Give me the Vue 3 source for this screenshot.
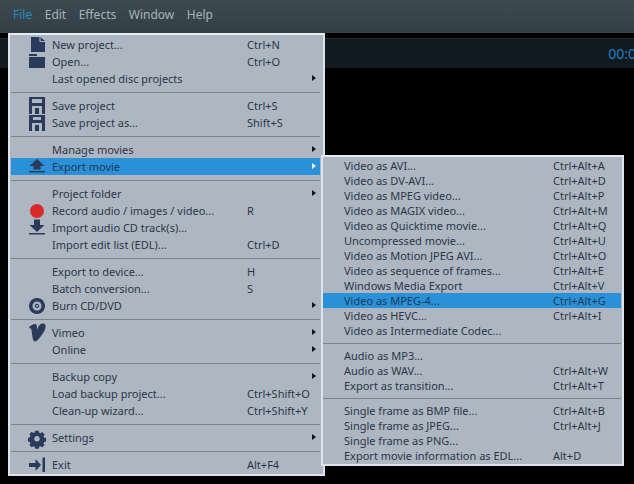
<script setup>
const main = [
  [
    { t: 'New project...', k: 'Ctrl+N', i: 'new' },
    { t: 'Open...', k: 'Ctrl+O', i: 'open' },
    { t: 'Last opened disc projects', sub: 1 }
  ],
  [
    { t: 'Save project', k: 'Ctrl+S', i: 'save' },
    { t: 'Save project as...', k: 'Shift+S', i: 'saveas' }
  ],
  [
    { t: 'Manage movies', sub: 1 },
    { t: 'Export movie', sub: 1, i: 'export', on: 1 }
  ],
  [
    { t: 'Project folder', sub: 1 },
    { t: 'Record audio / images / video...', k: 'R', i: 'rec' },
    { t: 'Import audio CD track(s)...', i: 'import' },
    { t: 'Import edit list (EDL)...', k: 'Ctrl+D' }
  ],
  [
    { t: 'Export to device...', k: 'H' },
    { t: 'Batch conversion...', k: 'S' },
    { t: 'Burn CD/DVD', sub: 1, i: 'disc' }
  ],
  [
    { t: 'Vimeo', sub: 1, i: 'vimeo' },
    { t: 'Online', sub: 1 }
  ],
  [
    { t: 'Backup copy', sub: 1 },
    { t: 'Load backup project...', k: 'Ctrl+Shift+O' },
    { t: 'Clean-up wizard...', k: 'Ctrl+Shift+Y' }
  ],
  [{ t: 'Settings', sub: 1, i: 'gear' }],
  [{ t: 'Exit', k: 'Alt+F4', i: 'exit' }]
]
const second = [
  [
    { t: 'Video as AVI...', k: 'Ctrl+Alt+A' },
    { t: 'Video as DV-AVI...', k: 'Ctrl+Alt+D' },
    { t: 'Video as MPEG video...', k: 'Ctrl+Alt+P' },
    { t: 'Video as MAGIX video...', k: 'Ctrl+Alt+M' },
    { t: 'Video as Quicktime movie...', k: 'Ctrl+Alt+Q' },
    { t: 'Uncompressed movie...', k: 'Ctrl+Alt+U' },
    { t: 'Video as Motion JPEG AVI...', k: 'Ctrl+Alt+O' },
    { t: 'Video as sequence of frames...', k: 'Ctrl+Alt+E' },
    { t: 'Windows Media Export', k: 'Ctrl+Alt+V' },
    { t: 'Video as MPEG-4...', k: 'Ctrl+Alt+G', on: 1 },
    { t: 'Video as HEVC...', k: 'Ctrl+Alt+I' },
    { t: 'Video as Intermediate Codec...' }
  ],
  [
    { t: 'Audio as MP3...' },
    { t: 'Audio as WAV...', k: 'Ctrl+Alt+W' },
    { t: 'Export as transition...', k: 'Ctrl+Alt+T' }
  ],
  [
    { t: 'Single frame as BMP file...', k: 'Ctrl+Alt+B' },
    { t: 'Single frame as JPEG...', k: 'Ctrl+Alt+J' },
    { t: 'Single frame as PNG...' },
    { t: 'Export movie information as EDL...', k: 'Alt+D' }
  ]
]
const bar = ['File', 'Edit', 'Effects', 'Window', 'Help']
</script>

<template>
  <div class="app">
    <nav class="bar">
      <span v-for="(b, n) in bar" :key="b" class="bar-item" :class="{ active: n === 0 }">{{ b }}</span>
    </nav>
    <div class="gap"></div>
    <div class="strip"><span class="time">00:0</span></div>

    <div class="menu main">
      <div v-for="(g, gi) in main" :key="gi" class="group">
        <div v-for="r in g" :key="r.t" class="row" :class="{ on: r.on }">
          <span class="ico">
            <svg v-if="r.i" width="22" height="22" viewBox="0 0 22 22" class="svg">
              <path v-if="r.i === 'new'" d="M5 3h8.500v5H19v10H5z M14.500 3L19 7h-4.500z" />
              <path v-else-if="r.i === 'open'" d="M3 3h8v2H3z M3 6h16v11H3z" />
              <path v-else-if="r.i === 'save'" fill-rule="evenodd" d="M3 2h16v17H3z M6 4v4h10V4z M6 11v8h10v-8z M9 13h4v6H9z" />
              <path v-else-if="r.i === 'saveas'" fill-rule="evenodd" d="M3 3h16v16H3z M7 5v3h8V5z M6 11v8h10v-8z M9 13h4v6H9z" />
              <path v-else-if="r.i === 'export'" d="M11 3l7.500 7H14.500v3.500h-7V10H3.500z M3 15h16v1.500H3z" />
              <circle v-else-if="r.i === 'rec'" cx="11" cy="11" r="7" class="red" />
              <path v-else-if="r.i === 'import'" d="M8 2.500h6v5.500h4.500L11 15 3.500 8H8z M3 16h16v1.500H3z" />
              <path v-else-if="r.i === 'disc'" fill-rule="evenodd" d="M11 3a8 8 0 1 0 .01 0z M11 6.500a4.500 4.500 0 1 1-.01 0z M11 8.800a2.200 2.200 0 1 0 .01 0z M11 10a1 1 0 1 1-.01 0z" />
              <path v-else-if="r.i === 'vimeo'" d="M3 5c3-2.500 5-3.500 6.500-3 1.500.5 1.500 3 1.500 6 1-3 2.500-6 5.500-6.500 2.500-.4 3.500 1.500 3 4-.8 4.500-6 11-9 13.500-1.500 1-2.800.2-3.500-1.500C6 14 6 9 5 6.500 4.700 6 4 6.500 3.800 6.700z" />
              <path v-else-if="r.i === 'gear'" fill-rule="evenodd" d="M9 3.300h4l.5 2.300 1.500.6 2-1.300 2.700 2.700-1.300 2 .6 1.500 2.300.4v4l-2.300.5-.6 1.500 1.300 2-2.700 2.700-2-1.300-1.500.6-.5 2.300H9l-.5-2.300-1.500-.6-2 1.300-2.700-2.700 1.300-2-.6-1.500-2.300-.5v-4L3 10.700l.6-1.500-1.300-2L5 4.500l2 1.300 1.500-.6z M11 9.300a3.200 3.200 0 1 0 .01 0z" transform="translate(1.300 .8) scale(.88)" />
              <path v-else-if="r.i === 'exit'" d="M3 9h6.500V5l5.500 6-5.500 6v-4H3z M16.500 3.500H19V18h-2.500z" />
            </svg>
          </span>
          <span class="label">{{ r.t }}</span>
          <span class="key">{{ r.k }}</span>
          <span v-if="r.sub" class="arrow" :class="{ white: r.on }"></span>
        </div>
      </div>
    </div>

    <div class="menu second">
      <div v-for="(g, gi) in second" :key="gi" class="group">
        <div v-for="r in g" :key="r.t" class="row" :class="{ on: r.on }">
          <span class="label">{{ r.t }}</span>
          <span class="key">{{ r.k }}</span>
        </div>
      </div>
    </div>
  </div>
</template>

<style scoped>
.app {
  position: relative;
  width: 634px;
  height: 484px;
  overflow: hidden;
  background: #000;
  font-family: "Noto Sans", sans-serif;
  font-size: 11px;
}
.bar {
  display: flex;
  align-items: center;
  height: 33px;
  box-sizing: border-box;
  padding: 0 0 5px 13px;
  gap: 12.500px;
  background: linear-gradient(#3e4a51, #333e45);
}
.bar-item {
  color: #a7b2b9;
  font-size: 12px;
}
.bar-item.active {
  color: #2b87c4;
}
.gap {
  height: 5px;
  background: #000;
}
.strip {
  display: flex;
  justify-content: flex-end;
  align-items: center;
  height: 30px;
  box-sizing: border-box;
  border-top: 1px solid #2a2f33;
  background: #101a20;
  overflow: hidden;
}
.time {
  color: #1f7fc0;
  font-size: 14px;
  margin-right: -2px;
  white-space: nowrap;
}
.menu {
  position: absolute;
  box-sizing: border-box;
  border: 2px solid #dde3e8;
  border-top-color: #e6ebef;
  background: #aeb6c2;
  color: #2b3648;
}
.main {
  left: 8px;
  top: 33px;
  width: 317px;
  height: 443px;
  padding: 1px 3px 0 1px;
}
.second {
  left: 321px;
  top: 155px;
  width: 303px;
  height: 311px;
  padding: 1px 1px 0 0;
}
.group + .group {
  margin-top: 5px;
  padding-top: 4px;
  border-top: 1px solid #7d8489;
}
.row {
  display: flex;
  align-items: center;
  height: 17px;
  position: relative;
  white-space: nowrap;
}
.second .row {
  height: 15px;
}
.row.on {
  background: #2a90d8;
  color: #1d3a5c;
}
.ico {
  width: 22px;
  height: 17px;
  margin-left: 15px;
  margin-right: 4px;
  flex: none;
  position: relative;
}
.svg {
  position: absolute;
  left: 0;
  top: -2px;
}
.svg path {
  fill: #2a3a5a;
}
.red {
  fill: #d82a2a;
}
.label {
  width: 195px;
  flex: none;
}
.second .label {
  width: 209px;
  margin-left: 21px;
}
.key {
  flex: none;
}
.arrow {
  position: absolute;
  right: 4px;
  top: 5px;
  border-left: 4px solid #10151c;
  border-top: 3.500px solid transparent;
  border-bottom: 3.500px solid transparent;
}
.arrow.white {
  border-left-color: #fff;
}
</style>
